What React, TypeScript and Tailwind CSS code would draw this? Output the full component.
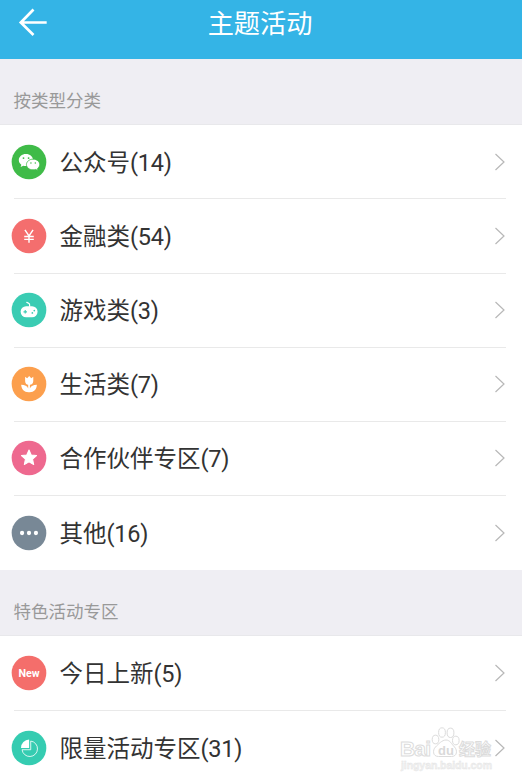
import type { ReactNode } from "react";

type Item = {
  id: string;
  name: string;
  count: number;
  color: string;
  icon: ReactNode;
};

const WechatIcon = () => (
  <svg viewBox="0 0 34 34" className="h-full w-full" fill="#fff">
    <path d="M14 9.200c-4 0-7 2.600-7 5.900 0 1.900 1 3.500 2.500 4.600l-.7 2.200 2.600-1.300c.9.300 1.700.400 2.600.400 4 0 7-2.600 7-5.900s-3-5.900-7-5.900z" />
    <path
      d="M21 14.200c3.600 0 6.500 2.300 6.500 5.300 0 1.600-.9 3-2.200 4l.5 1.900-2.200-1.100c-.8.300-1.700.400-2.600.400-3.600 0-6.500-2.300-6.500-5.200s2.900-5.300 6.500-5.300z"
      stroke="#3fbb48"
      strokeWidth="0.800"
    />
    <g fill="#3fbb48">
      <circle cx="11.600" cy="13.200" r="0.900" />
      <circle cx="16.600" cy="13.200" r="0.900" />
      <circle cx="18.900" cy="18" r="0.750" />
      <circle cx="23.200" cy="18" r="0.750" />
    </g>
  </svg>
);

const YuanIcon = () => (
  <svg
    viewBox="0 0 34 34"
    className="h-full w-full"
    fill="none"
    stroke="#fff"
    strokeWidth="1.400"
  >
    <path d="M13 11l4 6 4-6M17 17v6.500M12.300 17.500h9.400M12.300 20.300h9.400" />
  </svg>
);

const GameIcon = () => (
  <svg viewBox="0 0 34 34" className="h-full w-full">
    <path
      d="M14.600 9c.2 1.300 3 .8 3 2.800v2"
      fill="none"
      stroke="#fff"
      strokeWidth="1.200"
    />
    <rect x="8.800" y="13.300" width="16.600" height="10.900" rx="5.400" fill="#fff" />
    <path
      d="M11.600 18.800h3.400M13.300 17.100v3.400"
      stroke="#3accb3"
      strokeWidth="1.100"
    />
    <circle cx="22.200" cy="17.600" r="0.850" fill="#3accb3" />
    <circle cx="20.300" cy="19.900" r="0.850" fill="#3accb3" />
  </svg>
);

const FlowerIcon = () => (
  <svg viewBox="0 0 34 34" className="h-full w-full" fill="#fff">
    <path d="M13.200 9.800l2 1.500 2-2.200 2 2.200 2-1.500v4.200c0 2.200-1.400 3.600-3.300 3.800v3.500c.9-2.200 3.400-3.500 6.800-3.500-.3 4.600-2.700 7.300-7 7.300h-1.200c-4.300 0-6.700-2.700-7.200-7.300 3.600 0 6 1.300 6.900 3.500v-3.500c-1.700-.2-3-1.600-3-3.800z" />
  </svg>
);

const StarIcon = () => (
  <svg
    viewBox="0 0 34 34"
    className="h-full w-full"
    fill="#fff"
    stroke="#fff"
    strokeLinejoin="round"
  >
    <path d="M17 9.200l2.200 4.800 5.200.6-3.900 3.600 1.100 5.200-4.600-2.600-4.600 2.600 1.100-5.200-3.900-3.600 5.200-.6z" />
  </svg>
);

const MoreIcon = () => (
  <svg viewBox="0 0 34 34" className="h-full w-full" fill="#fff">
    <circle cx="10.200" cy="17" r="2.100" />
    <circle cx="17" cy="17" r="2.100" />
    <circle cx="23.800" cy="17" r="2.100" />
  </svg>
);

const PieIcon = () => (
  <svg viewBox="0 0 34 34" className="h-full w-full">
    <path d="M17.100 8.700v8.200H9.200a8.200 8.200 0 0 1 7.900-8.200z" fill="#fff" />
    <path
      d="M18.700 10.200a7.600 7.600 0 1 1-8.500 8.500h8.500z"
      fill="none"
      stroke="#fff"
      strokeWidth="0.800"
    />
  </svg>
);

const typeList: Item[] = [
  {
    id: "wechat",
    name: "公众号",
    count: 14,
    color: "bg-[#3fbb48]",
    icon: <WechatIcon />,
  },
  {
    id: "finance",
    name: "金融类",
    count: 54,
    color: "bg-[#f46e6e]",
    icon: <YuanIcon />,
  },
  {
    id: "game",
    name: "游戏类",
    count: 3,
    color: "bg-[#3accb3]",
    icon: <GameIcon />,
  },
  {
    id: "life",
    name: "生活类",
    count: 7,
    color: "bg-[#fc9f4d]",
    icon: <FlowerIcon />,
  },
  {
    id: "partner",
    name: "合作伙伴专区",
    count: 7,
    color: "bg-[#ee698f]",
    icon: <StarIcon />,
  },
  {
    id: "other",
    name: "其他",
    count: 16,
    color: "bg-[#788896]",
    icon: <MoreIcon />,
  },
];

const featureList: Item[] = [
  {
    id: "new",
    name: "今日上新",
    count: 5,
    color: "bg-[#f46e6b]",
    icon: (
      <span className="pt-0.5 font-['Roboto',sans-serif] text-[10.500px] leading-none font-bold text-white">
        New
      </span>
    ),
  },
  {
    id: "limited",
    name: "限量活动专区",
    count: 31,
    color: "bg-[#35ccb1]",
    icon: <PieIcon />,
  },
];

function Section({ title, items }: { title: string; items: Item[] }) {
  return (
    <section>
      <h2 className="flex h-[66.300px] items-end border-b border-[#e8e8eb] bg-[#efeef3] pb-2.5 pl-[13.500px] text-[17.500px] leading-[26px] text-[#999]">
        {title}
      </h2>
      <ul>
        {items.map((item, index) => (
          <li key={item.id} className="flex h-[74.150px] flex-col bg-white">
            <div className="flex flex-1 items-center pr-4 pl-3">
              <span
                className={`flex h-[34px] w-[34px] shrink-0 scale-[1.02] items-center justify-center rounded-full ${item.color}`}
              >
                {item.icon}
              </span>
              <span className="ml-[13.500px] flex-1 pt-0.5 text-[23.500px] leading-8 whitespace-nowrap text-[#333]">
                {item.name}
                <span className="tracking-[-0.200px]">({item.count})</span>
              </span>
              <svg
                viewBox="0 0 12 18"
                className="h-[18px] w-3 shrink-0"
                fill="none"
                stroke="#b8b8b8"
                strokeWidth="1.200"
              >
                <path d="M1.500 1l8.500 8-8.500 8" />
              </svg>
            </div>
            {index < items.length - 1 && (
              <div className="mr-4 ml-[14px] h-px bg-[#e9e9e9]" />
            )}
          </li>
        ))}
      </ul>
    </section>
  );
}

function Watermark() {
  return (
    <svg
      viewBox="0 0 94 46"
      className="absolute top-[727px] left-[400px] h-[46px] w-[94px]"
      fontFamily="'Liberation Sans','Noto Sans CJK SC',sans-serif"
      fontWeight="bold"
      fill="#fff"
      stroke="#dcdcdc"
      strokeWidth="1"
    >
      <text x="0" y="29" fontSize="21" textLength="31">
        Bai
      </text>
      <ellipse cx="35.500" cy="12.500" rx="3.300" ry="4.300" />
      <ellipse cx="42" cy="5.500" rx="3.400" ry="4.700" />
      <ellipse cx="50.500" cy="5.800" rx="3.400" ry="4.700" />
      <ellipse cx="55.800" cy="13.500" rx="3.300" ry="4.300" />
      <path d="M46 13c4 0 5.500 4 8.500 7 3 3 3 9.500-3 9.500H38.500c-6 0-6-6.500-3-9.500 3-3 6.500-7 10.500-7z" />
      <text
        x="38"
        y="27.500"
        fontSize="13"
        textLength="16"
        fill="#d9d9d9"
        stroke="none"
      >
        du
      </text>
      <text x="59" y="28" fontSize="16" textLength="32">
        经验
      </text>
      <text
        x="1"
        y="42"
        fontSize="10.500"
        textLength="91"
        fill="#f2f2f2"
        stroke="#e4e4e4"
        strokeWidth="0.400"
      >
        jingyan.baidu.com
      </text>
    </svg>
  );
}

export default function App() {
  return (
    <div className="relative h-[783px] w-full overflow-hidden bg-white font-['Roboto','Noto_Sans_CJK_SC',sans-serif]">
      <header className="flex h-[59px] items-start bg-[#34b4e6] text-white">
        <svg
          viewBox="0 0 30 28"
          className="mt-2 ml-[18px] h-7 w-[30px]"
          fill="none"
          stroke="#fff"
          strokeWidth="2.700"
        >
          <path d="M15.500 1.500L2.800 14.500l12.700 12.500M3 14.500h25.700" />
        </svg>
        <h1 className="mt-[5px] flex-1 pr-[50px] text-center text-[26.200px] leading-[38px]">
          主题活动
        </h1>
      </header>
      {/* 活动分类列表 */}
      <Section title="按类型分类" items={typeList} />
      {/* 特色活动列表 */}
      <Section title="特色活动专区" items={featureList} />
      <Watermark />
    </div>
  );
}
